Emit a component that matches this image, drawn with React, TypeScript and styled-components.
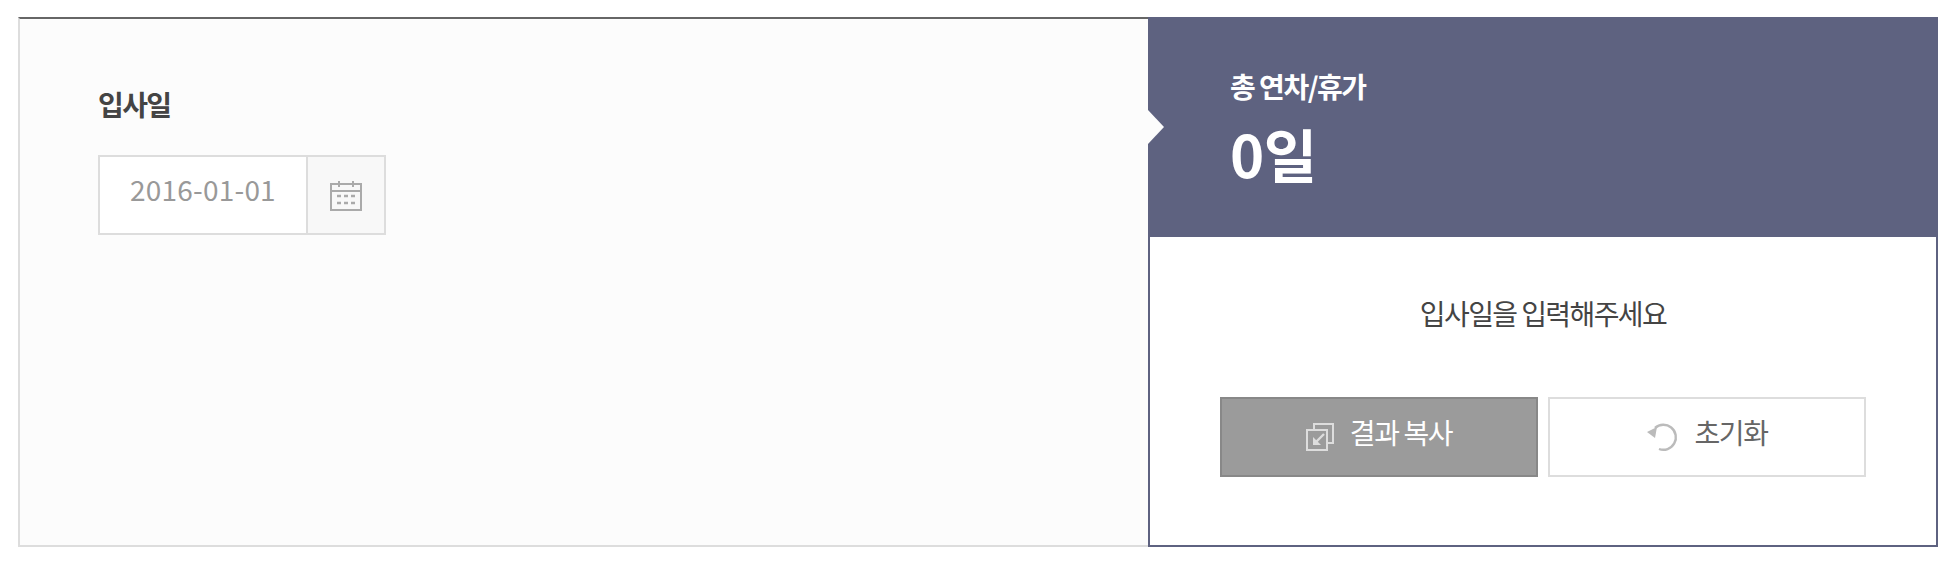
import styled, { createGlobalStyle } from "styled-components";

const GlobalStyle = createGlobalStyle`
  html, body {
    margin: 0;
    background: #fff;
    font-family: "Noto Sans CJK KR", "Noto Sans", sans-serif;
  }
  * {
    box-sizing: border-box;
  }
`;

const Page = styled.div`
  padding: 17px 22px 19px 18px;
`;

const Calculator = styled.section`
  display: flex;
  height: 530px;
`;

const InputPanel = styled.div`
  flex: 1;
  padding: 61px 0 0 78px;
  background: #fcfcfc;
  border: 2px solid #ddd;
  border-top-color: #666;
  border-right: none;
`;

const FieldLabel = styled.h3`
  margin: 0 0 27px;
  height: 48px;
  line-height: 48px;
  font-size: 28px;
  font-weight: 700;
  letter-spacing: -1.6px;
  color: #444;
`;

const DateField = styled.div`
  display: flex;
  width: 288px;
  height: 80px;
  border: 2px solid #ddd;
`;

const DateValue = styled.div`
  width: 206px;
  background: #fff;
  padding-bottom: 11px;
  text-align: center;
  line-height: 65px;
  font-size: 28px;
  letter-spacing: 0.2px;
  color: #999;
`;

const CalendarButton = styled.div`
  flex: 1;
  display: flex;
  align-items: center;
  justify-content: center;
  padding-top: 1px;
  background: #f8f8f8;
  border-left: 2px solid #ddd;
`;

const ResultPanel = styled.div`
  display: flex;
  flex-direction: column;
  width: 790px;
`;

const Summary = styled.div`
  position: relative;
  height: 220px;
  padding: 45px 0 0 82px;
  background: #5e6280;
  color: #fff;

  &::before {
    content: "";
    position: absolute;
    left: 0;
    top: 93px;
    border-left: 16px solid #fcfcfc;
    border-top: 17px solid transparent;
    border-bottom: 17px solid transparent;
  }
`;

const SummaryLabel = styled.div`
  height: 48px;
  line-height: 48px;
  font-size: 28px;
  font-weight: 700;
  letter-spacing: -1.5px;
`;

const SummaryValue = styled.div`
  height: 86px;
  line-height: 86px;
  font-size: 58px;
  font-weight: 700;
  letter-spacing: -0.5px;
`;

const Details = styled.div`
  flex: 1;
  padding: 40px 70px 0 70px;
  background: #fff;
  border: 2px solid #5e6280;
  border-top: none;
`;

const Message = styled.p`
  margin: 0 0 48px;
  height: 72px;
  line-height: 72px;
  text-align: center;
  font-size: 28px;
  letter-spacing: -1.6px;
  color: #444;
`;

const ButtonRow = styled.div`
  display: flex;
  gap: 10px;
`;

const ActionButton = styled.button<{ $primary?: boolean }>`
  display: flex;
  align-items: center;
  justify-content: center;
  gap: 16px;
  width: 318px;
  height: 80px;
  padding: 0 0 11px;
  background: ${(p) => (p.$primary ? "#9b9b9b" : "#fff")};
  border: 2px solid ${(p) => (p.$primary ? "#888" : "#ddd")};
  color: ${(p) => (p.$primary ? "#fff" : "#666")};
  font-family: inherit;
  font-size: 28px;
  letter-spacing: -1.4px;

  svg {
    margin-top: 11px;
  }
`;

const CalendarIcon = () => (
  <svg width="34" height="32" viewBox="0 0 34 32" fill="none" stroke="#aaa" strokeWidth="2">
    <rect x="2" y="4" width="30" height="26" />
    <path d="M2 11h30M10 1v6M24 1v6" />
    <path d="M8 16h4M15 16h4M22 16h4M8 23h4M15 23h4M22 23h4" strokeWidth="2.4" />
  </svg>
);

const CopyIcon = () => (
  <svg width="28" height="28" viewBox="0 0 28 28" fill="none" stroke="#ddd" strokeWidth="2">
    <path d="M8 7V1h19v19h-6" />
    <rect x="1" y="7" width="20" height="20" />
    <path d="M18 11l-9 9" strokeWidth="2.4" />
    <path d="M7 14v8h8z" fill="#ddd" stroke="none" />
  </svg>
);

const ResetIcon = () => (
  <svg width="32" height="30" viewBox="0 0 32 30" fill="none" stroke="#bbb" strokeWidth="2.4">
    <path d="M9 6A12.5 12.5 0 1 1 13 27" />
    <path d="M1 10l10-5 -2 11z" fill="#bbb" stroke="none" />
  </svg>
);

export default function App() {
  return (
    <Page>
      <GlobalStyle />
      <Calculator>
        <InputPanel>
          <FieldLabel>입사일</FieldLabel>
          <DateField>
            <DateValue>2016-01-01</DateValue>
            <CalendarButton>
              <CalendarIcon />
            </CalendarButton>
          </DateField>
        </InputPanel>
        <ResultPanel>
          <Summary>
            <SummaryLabel>총 연차/휴가</SummaryLabel>
            <SummaryValue>0일</SummaryValue>
          </Summary>
          <Details>
            <Message>입사일을 입력해주세요</Message>
            <ButtonRow>
              <ActionButton $primary>
                <CopyIcon />
                결과 복사
              </ActionButton>
              <ActionButton>
                <ResetIcon />
                초기화
              </ActionButton>
            </ButtonRow>
          </Details>
        </ResultPanel>
      </Calculator>
    </Page>
  );
}
